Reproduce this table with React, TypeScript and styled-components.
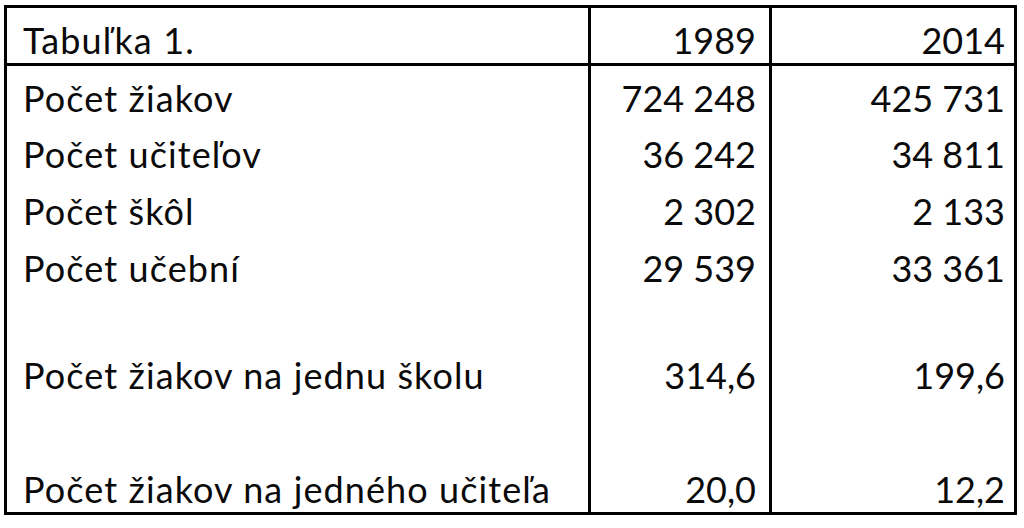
import styled, { createGlobalStyle } from "styled-components";

const GlobalStyle = createGlobalStyle`
  html, body {
    margin: 0;
    padding: 0;
    background: #ffffff;
  }
  body {
    font-family: Lato, "Noto Sans", "Liberation Sans", sans-serif;
    color: #0a0a0a;
  }
`;

const rows = [
  { label: "Počet žiakov", a: "724 248", b: "425 731", height: 55 },
  { label: "Počet učiteľov", a: "36 242", b: "34 811", height: 56 },
  { label: "Počet škôl", a: "2 302", b: "2 133", height: 57 },
  { label: "Počet učební", a: "29 539", b: "33 361", height: 57 },
  { label: "Počet žiakov na jednu školu", a: "314,6", b: "199,6", height: 107 },
  { label: "Počet žiakov na jedného učiteľa", a: "20,0", b: "12,2", height: 114 },
];

const Page = styled.div`
  width: 1024px;
  height: 528px;
  padding: 5px 0 0 4px;
  box-sizing: border-box;
`;

const Table = styled.div`
  width: 1013px;
  border: 3px solid #000;
  box-sizing: border-box;
  display: grid;
  grid-template-columns: 584px 181px 242px;
`;

const Row = styled.div<{ $height: number; $head?: boolean }>`
  display: contents;

  & > div {
    height: ${(p) => p.$height}px;
    border-bottom: ${(p) => (p.$head ? "3px solid #000" : "0")};
  }
`;

const Cell = styled.div<{ $align?: "left" | "right"; $padRight?: number }>`
  display: flex;
  align-items: flex-end;
  justify-content: ${(p) => (p.$align === "right" ? "flex-end" : "flex-start")};
  padding: 0 ${(p) => p.$padRight ?? 13}px 5px 16px;
  box-sizing: border-box;
  font-size: 36px;
  line-height: 36px;
  white-space: nowrap;
  letter-spacing: ${(p) => (p.$align === "right" ? "0" : "1.1px")};
  border-right: 3px solid #000;

  &:nth-child(3) {
    border-right: 0;
  }
`;

export default function App() {
  return (
    <>
      <GlobalStyle />
      <Page>
        <Table>
          <Row $height={58} $head>
            <Cell>Tabuľka 1.</Cell>
            <Cell $align="right">1989</Cell>
            <Cell $align="right" $padRight={9}>
              2014
            </Cell>
          </Row>
          {rows.map((r) => (
            <Row key={r.label} $height={r.height}>
              <Cell>{r.label}</Cell>
              <Cell $align="right">{r.a}</Cell>
              <Cell $align="right" $padRight={9}>
                {r.b}
              </Cell>
            </Row>
          ))}
        </Table>
      </Page>
    </>
  );
}
